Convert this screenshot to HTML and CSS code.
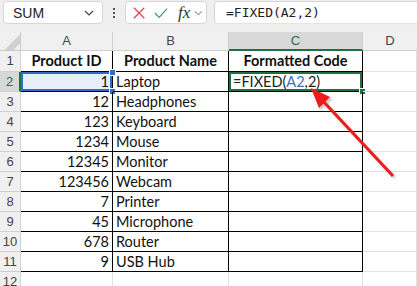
FILE: index.html
```html
<!DOCTYPE html>
<html lang="en">
<head>
    <meta charset="UTF-8">
    <title>FIXED</title>
    <link rel="stylesheet" href="styles.css">
</head>
<body>
<div class="toolbar">
    <div class="namebox">
        <span>SUM</span>
        <svg class="chev" width="10" height="6" viewBox="0 0 10 6"><path d="M1 1l4 4 4-4" fill="none" stroke="#444" stroke-width="1.2"/></svg>
    </div>
    <div class="dots">
        <i></i><i></i><i></i>
    </div>
    <div class="fxbox">
        <svg width="14" height="14" viewBox="0 0 14 14"><path d="M1 1l12 12M13 1L1 13" stroke="#e0474c" stroke-width="1.4"/></svg>
        <svg width="16" height="14" viewBox="0 0 16 14"><path d="M1 7l5 5L15 2" fill="none" stroke="#3ca05c" stroke-width="1.4"/></svg>
        <span class="fx">fx</span>
        <svg class="chev" width="10" height="6" viewBox="0 0 10 6"><path d="M1 1l4 4 4-4" fill="none" stroke="#999" stroke-width="1.2"/></svg>
    </div>
    <div class="formula">=FIXED(A2,2)</div>
</div>

<div class="sheet">
    <div class="corner"></div>
    <div class="colhead">A</div>
    <div class="colhead">B</div>
    <div class="colhead active">C</div>
    <div class="colhead last">D</div>

    <div class="rowhead">1</div>
    <div class="cell data th">Product ID</div>
    <div class="cell data th">Product Name</div>
    <div class="cell data th">Formatted Code</div>
    <div class="cell"></div>

    <div class="rowhead active">2</div>
    <div class="cell data num ref">1<b class="h tr"></b><b class="h br"></b></div>
    <div class="cell data">Laptop</div>
    <div class="cell data edit">=FIXED(<span class="refc">A2</span>,2)<b class="h gr"></b></div>
    <div class="cell"></div>

    <div class="rowhead">3</div>
    <div class="cell data num">12</div>
    <div class="cell data">Headphones</div>
    <div class="cell data"></div>
    <div class="cell"></div>

    <div class="rowhead">4</div>
    <div class="cell data num">123</div>
    <div class="cell data">Keyboard</div>
    <div class="cell data"></div>
    <div class="cell"></div>

    <div class="rowhead">5</div>
    <div class="cell data num">1234</div>
    <div class="cell data">Mouse</div>
    <div class="cell data"></div>
    <div class="cell"></div>

    <div class="rowhead">6</div>
    <div class="cell data num">12345</div>
    <div class="cell data">Monitor</div>
    <div class="cell data"></div>
    <div class="cell"></div>

    <div class="rowhead">7</div>
    <div class="cell data num">123456</div>
    <div class="cell data">Webcam</div>
    <div class="cell data"></div>
    <div class="cell"></div>

    <div class="rowhead">8</div>
    <div class="cell data num">7</div>
    <div class="cell data">Printer</div>
    <div class="cell data"></div>
    <div class="cell"></div>

    <div class="rowhead">9</div>
    <div class="cell data num">45</div>
    <div class="cell data">Microphone</div>
    <div class="cell data"></div>
    <div class="cell"></div>

    <div class="rowhead">10</div>
    <div class="cell data num">678</div>
    <div class="cell data">Router</div>
    <div class="cell data"></div>
    <div class="cell"></div>

    <div class="rowhead">11</div>
    <div class="cell data num">9</div>
    <div class="cell data">USB Hub</div>
    <div class="cell data"></div>
    <div class="cell"></div>

    <div class="rowhead">12</div>
    <div class="cell"></div>
    <div class="cell"></div>
    <div class="cell"></div>
    <div class="cell"></div>
</div>

<svg class="arrow" width="417" height="286" viewBox="0 0 417 286">
    <defs>
        <filter id="blur"><feGaussianBlur stdDeviation="1.2"/></filter>
    </defs>
    <g transform="translate(2 2)" fill="#888" stroke="#888" opacity="0.45" filter="url(#blur)">
        <line x1="393" y1="176" x2="322" y2="100" stroke-width="3"/>
        <polygon points="311,88 330,97 319,108"/>
    </g>
    <line x1="393" y1="176" x2="322" y2="100" stroke="#ee1b1b" stroke-width="3"/>
    <polygon points="311,88 330,97 319,108" fill="#ee1b1b"/>
</svg>
</body>
</html>
```

FILE: styles.css
```css
body {
    margin: 0;
    width: 417px;
    height: 286px;
    overflow: hidden;
    background: #fff;
    font-family: Lato, "Liberation Sans", sans-serif;
}

/* formula bar */
.toolbar {
    height: 32px;
    box-sizing: border-box;
    padding-top: 1px;
    display: flex;
    align-items: flex-start;
    background: #efefef;
}
.namebox {
    margin-left: 3px;
    width: 100px;
    height: 23px;
    box-sizing: border-box;
    background: #fff;
    border: 1px solid #d6d6d6;
    border-radius: 4px;
    display: flex;
    align-items: center;
    justify-content: space-between;
    padding: 0 8px 0 9px;
    font-family: "Liberation Sans", sans-serif;
    font-size: 14px;
    color: #222;
}
.dots {
    width: 22px;
    height: 23px;
    display: flex;
    flex-direction: column;
    align-items: center;
    justify-content: center;
    gap: 2px;
}
.dots i {
    width: 2px;
    height: 2px;
    background: #555;
}
.fxbox {
    width: 82px;
    height: 23px;
    box-sizing: border-box;
    background: #fff;
    border: 1px solid #d6d6d6;
    border-radius: 4px;
    display: flex;
    align-items: center;
    padding: 0 3px 0 7px;
    gap: 9px;
}
.fx {
    font-family: "Liberation Serif", serif;
    font-style: italic;
    font-size: 17px;
    color: #333;
    margin-left: 1px;
    margin-right: -5px;
}
.formula {
    margin-left: 7px;
    flex: 1;
    height: 23px;
    box-sizing: border-box;
    background: #fff;
    border: 1px solid #d6d6d6;
    border-right: none;
    border-bottom-color: #dfe8da;
    border-radius: 4px 0 0 4px;
    padding-left: 11px;
    font-family: "DejaVu Sans Mono", monospace;
    font-size: 13px;
    line-height: 21px;
    color: #222;
}

/* grid */
.sheet {
    display: grid;
    grid-template-columns: 21px 92px 116px 134px 54px;
    grid-template-rows: 19px 21px repeat(11, 20px);
}
.sheet > div {
    box-sizing: border-box;
    border-right: 1px solid #e1e1e1;
    border-bottom: 1px solid #e1e1e1;
    position: relative;
    white-space: nowrap;
    overflow: visible;
}
.corner {
    background: #f0f0f0 linear-gradient(135deg, transparent 60%, #d0d0d0 60%, #d0d0d0 82%, transparent 82%);
    border-color: #c9c9c9 !important;
}
.colhead {
    background: #f0f0f0;
    border-color: #d0d0d0 !important;
    text-align: center;
    font-family: "Liberation Sans", sans-serif;
    font-size: 13px;
    line-height: 18px;
    color: #444;
}
.colhead.last {
    border-right: none !important;
}
.colhead.active {
    background: #d8d8d8;
    color: #1e7145;
    border-bottom: 2px solid #1e7145 !important;
}
.rowhead {
    background: #f0f0f0;
    border-color: #d0d0d0 !important;
    text-align: center;
    font-family: "Liberation Sans", sans-serif;
    font-size: 13px;
    line-height: 19px;
    color: #444;
}
.rowhead.active {
    background: #d8d8d8;
    color: #1e7145;
    border-right: 2px solid #1e7145 !important;
}
.cell {
    font-size: 14.5px;
    line-height: 19px;
    color: #111;
    padding: 0 3px;
}
.cell.data {
    border-color: #000;
}
.th {
    font-weight: bold;
    text-align: center;
    line-height: 20px;
}
.num {
    text-align: right;
}
.ref {
    background: #e8eef8;
    box-shadow: inset 0 0 0 2px #2f6dc6;
}
.edit {
    box-shadow: inset 0 0 0 2px #1e7145;
    padding-left: 4px;
    color: #222;
}
.refc {
    color: #3e6fc1;
}

/* selection handles */
.h {
    position: absolute;
    width: 5px;
    height: 5px;
    border: 1px solid #fff;
}
.h.tr {
    top: -3px;
    right: -4px;
    background: #2f6dc6;
}
.h.br {
    bottom: -4px;
    right: -4px;
    background: #2f6dc6;
}
.h.gr {
    bottom: -4px;
    right: -4px;
    background: #1e7145;
}

.arrow {
    position: absolute;
    top: 0;
    left: 0;
    pointer-events: none;
}
```
